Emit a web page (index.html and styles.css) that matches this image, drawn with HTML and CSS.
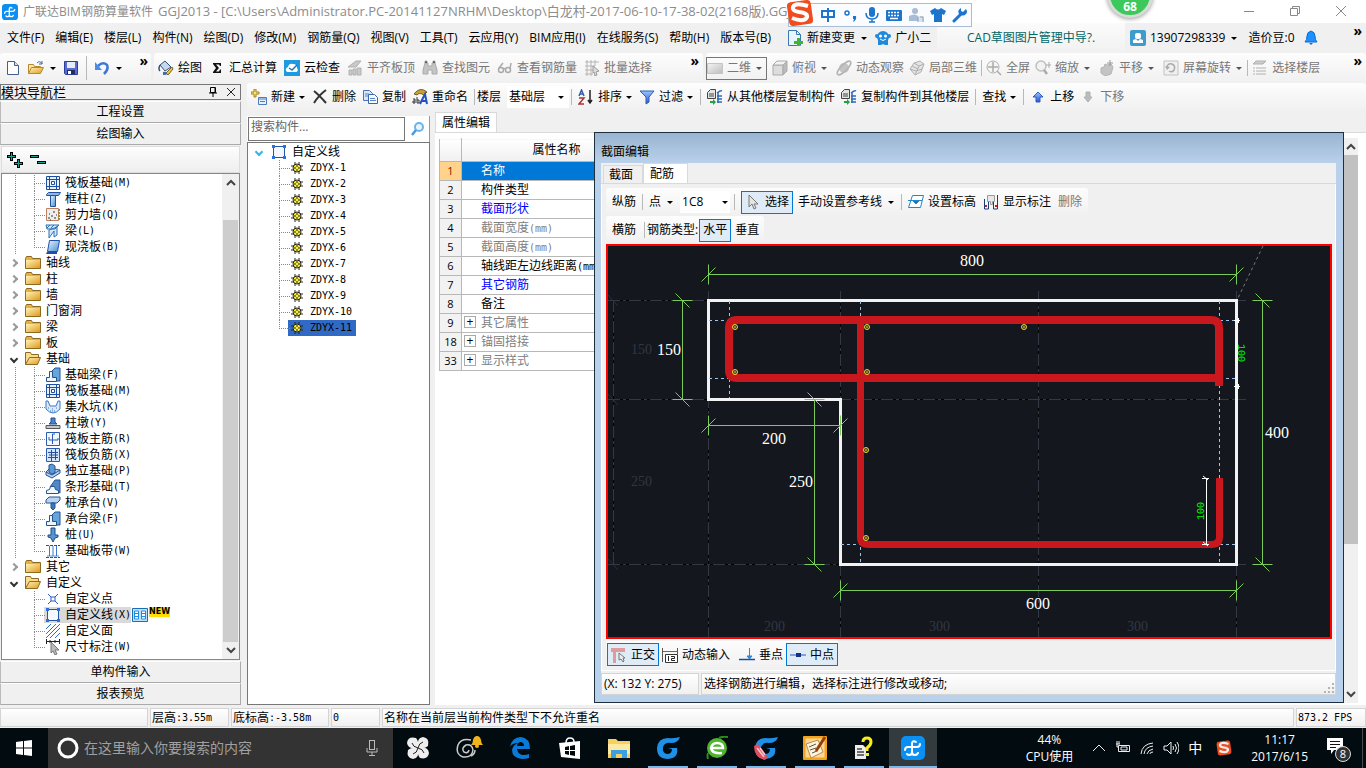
FILE: index.html
```html
<!DOCTYPE html>
<html lang="zh-CN">
<head>
<meta charset="utf-8">
<title>广联达BIM钢筋算量软件 GGJ2013</title>
<link rel="stylesheet" href="styles.css">
</head>
<body>
<svg class="sprite" aria-hidden="true">
  <defs>
    <linearGradient id="gold" x1="0" y1="0" x2="1" y2="1"><stop offset="0" stop-color="#fff3b8"/><stop offset="1" stop-color="#e09a1c"/></linearGradient>
    <linearGradient id="steel" x1="0" y1="0" x2="1" y2="1"><stop offset="0" stop-color="#eaf5ff"/><stop offset="1" stop-color="#4a8fd0"/></linearGradient>
    <linearGradient id="pale" x1="0" y1="0" x2="1" y2="1"><stop offset="0" stop-color="#f4f4f4"/><stop offset="1" stop-color="#bdbdbd"/></linearGradient>
    <linearGradient id="blue" x1="0" y1="0" x2="0" y2="1"><stop offset="0" stop-color="#9cc4ff"/><stop offset="1" stop-color="#2456d0"/></linearGradient>
  </defs>
  <symbol id="app" viewBox="0 0 24 24"><rect width="24" height="24" rx="5" fill="#0c8ff2"/><path d="M15 6q-3-2-4 1v9q0 3-3 3-1 0-2-1M4 14q0-3 3-3h9q3 0 3-3M11 16q0 3 3 3 2 0 3-2" fill="none" stroke="#fff" stroke-width="2" stroke-linecap="round"/></symbol>
  <symbol id="new" viewBox="0 0 16 16"><path d="M2.500 1.500h7l4 4v9h-11z" fill="#fff" stroke="#42608c"/><path d="M9.500 1.500v4h4" fill="#cfe0f4" stroke="#42608c"/></symbol>
  <symbol id="open" viewBox="0 0 16 16"><path d="M.5 13.500v-9h5l1 2h6v2" fill="#fbe6a0" stroke="#b58a2c"/><path d="M.5 13.500l3-6h12l-3 6z" fill="url(#gold)" stroke="#b58a2c"/><path d="M9 3q3-3 5 1M14 1v3h-3" fill="none" stroke="#49699c"/></symbol>
  <symbol id="save" viewBox="0 0 16 16"><path d="M1.500 1.500h13v13h-12l-1-1z" fill="#5a6cd0" stroke="#2b3e98"/><path d="M4 2h8v6H4z" fill="#e6ecfa"/><path d="M4 10h8v4H4z" fill="#222c58"/><path d="M5 11h3v3H5z" fill="#fff"/></symbol>
  <symbol id="undo" viewBox="0 0 16 16"><path d="M4 6q5-5 9-1 2 4-3 9" fill="none" stroke="#3d78d8" stroke-width="2.500"/><path d="M1 2v8h7z" fill="#4e8be6"/></symbol>
  <symbol id="draw" viewBox="0 0 16 16"><path d="M2 5l5-4 6 6-6 4z" fill="#c4d8ee" stroke="#35547c"/><path d="M2 5q-2 4 0 6" fill="none" stroke="#35547c" stroke-width="1.500"/><path d="M8 13l6-6 1 2-5 6z" fill="#f0c148" stroke="#7c6220"/><path d="M5 12q2-1 4 1 1 2-4 2z" fill="#3e6cb8"/></symbol>
  <symbol id="sigma" viewBox="0 0 16 16"><path d="M4 3h8v3h-1l-1-1.500H7L10 8l-3 3.500h3l1-2h1V13H4v-1l3-4-3-4z" fill="#111"/></symbol>
  <symbol id="cloud" viewBox="0 0 16 16"><path d="M0 0h16v16H0z" fill="#1e9be0"/><path d="M3 12q-3-3 1-5 1-4 5-3 4 0 4 4 2 3-1 4z" fill="#fff"/><path d="M5 8l3 2 5-5" fill="none" stroke="#1e78b8" stroke-width="1.500"/></symbol>
  <symbol id="align" viewBox="0 0 16 16"><path d="M1 7l8-6h5l-5 6zM2 10h3v5H2zM6 9h3v6H6zM10 8h4v7h-4z" fill="#c9c9c9" stroke="#b0b0b0"/></symbol>
  <symbol id="binoc" viewBox="0 0 16 16"><path d="M3 3h3v3h4V3h3l2 7v4h-5v-4H6v4H1v-4z" fill="#c4c4c4" stroke="#aaa"/><path d="M3 3V1h2v2M11 3V1h2v2" stroke="#aaa"/></symbol>
  <symbol id="glasses" viewBox="0 0 16 16"><g fill="none" stroke="#aaa" stroke-width="1.500"><circle cx="4" cy="10" r="2.500"/><circle cx="11" cy="10" r="2.500"/><path d="M6 9q1-1 2 0M2 8l4-5M13 9l1-6"/></g></symbol>
  <symbol id="batch" viewBox="0 0 16 16"><path d="M1 2h14M1 6h10M1 10h8M1 14h8M3 0v16M7 0v16M11 0v6" stroke="#b4b4b4" fill="none"/><path d="M9 6l6 5-3 1 1 3-2 1-1-4-1 1z" fill="#ddd" stroke="#999"/></symbol>
  <symbol id="plane" viewBox="0 0 16 16"><path d="M.5 3.500h15v10H.5z" fill="url(#pale)" stroke="#c5c5c5"/></symbol>
  <symbol id="cube" viewBox="0 0 16 16"><path d="M1 5h10v10H1z" fill="#ddd" stroke="#aaa"/><path d="M1 5l4-4h10l-4 4z" fill="#f2f2f2" stroke="#aaa"/><path d="M11 5l4-4v10l-4 4z" fill="#bbb" stroke="#aaa"/></symbol>
  <symbol id="orbit" viewBox="0 0 16 16"><circle cx="8" cy="8" r="5" fill="#c4c4c4"/><ellipse cx="8" cy="8" rx="9" ry="3" transform="rotate(-45 8 8)" fill="none" stroke="#b4b4b4" stroke-width="1.500"/></symbol>
  <symbol id="part" viewBox="0 0 16 16"><path d="M1 9l4-6 6-2 4 3-3 8-6 3z" fill="#e4e4e4" stroke="#b0b0b0"/><path d="M5 3l5 3 5-2M10 6l-4 9M1 9l6 2 6-2M3 6l6 3" fill="none" stroke="#b0b0b0"/></symbol>
  <symbol id="full" viewBox="0 0 16 16"><circle cx="7" cy="7" r="6" fill="#f4f4f4" stroke="#b0b0b0"/><path d="M7 2v10M2 7h10M11 11l4 4" stroke="#aaa" stroke-width="1.500"/></symbol>
  <symbol id="zoomer" viewBox="0 0 16 16"><circle cx="6" cy="6" r="5" fill="#f2f2f2" stroke="#c0c0c0" stroke-width="1.500"/><path d="M9 10l3 4" stroke="#aaa" stroke-width="2.500"/><path d="M14 2v6M11 5h5" stroke="#aaa"/></symbol>
  <symbol id="hand" viewBox="0 0 16 16"><path d="M2 8l3-1 1-3 2 1 4-1 2 3-2 7-6 2-4-3z" fill="#c4c4c4" stroke="#b4b4b4"/><path d="M11 0v6M8 3h6" stroke="#999"/></symbol>
  <symbol id="rotate" viewBox="0 0 16 16"><path d="M1 1h14v14H1z" fill="#f0f0f0" stroke="#c2c2c2"/><path d="M4 8q0-5 5-4 4 2 2 6-2 3-5 1" fill="none" stroke="#aaa" stroke-width="1.500"/><path d="M2 6l2 4 3-3z" fill="#aaa"/></symbol>
  <symbol id="floors" viewBox="0 0 16 16"><path d="M1 4l3-3h10l-3 3zM4 8h10M4 11h10M4 14h10M1 8h2M1 11h2M1 14h2" fill="#ccc" stroke="#b0b0b0"/></symbol>
  <symbol id="newdoc" viewBox="0 0 16 16"><path d="M1.500.5h8l4 4v11h-12z" fill="#e8f4ff" stroke="#3a78b4"/><path d="M9.500.5v4h4" fill="none" stroke="#3a78b4"/><path d="M10 8h3v3h3v3h-3v2h-3v-2H7v-3h3z" fill="#42b52c"/></symbol>
  <symbol id="mascot" viewBox="0 0 16 16"><path d="M3 10h10v5h-3l-2-1-2 1H3z" fill="#2089dc"/><circle cx="8" cy="7" r="6" fill="#2089dc"/><circle cx="2" cy="6" r="2" fill="#2089dc"/><circle cx="14" cy="6" r="2" fill="#2089dc"/><circle cx="5.500" cy="6" r="1.500" fill="#fff"/><circle cx="10.500" cy="6" r="1.500" fill="#fff"/><path d="M5 9q3 3 6 0" fill="none" stroke="#fff"/></symbol>
  <symbol id="user" viewBox="0 0 16 16"><rect width="16" height="16" rx="2" fill="#3f9bcc"/><rect x="5" y="3" width="6" height="6" rx="2" fill="#fff"/><path d="M3 13v-3l3-1 2 2 2-2 3 1v3z" fill="#fff"/></symbol>
  <symbol id="bell" viewBox="0 0 16 16"><path d="M2 12q2-2 2-6 0-4 4-5 4 1 4 5 0 4 2 6z" fill="#1e90ff" stroke="#0c6fd0"/><path d="M6 13h4l-2 2z" fill="#1670cc"/></symbol>
  <symbol id="create" viewBox="0 0 16 16"><path d="M3 0h2v3h3v2H5v3H3V5H0V3h3z" fill="#fce36a" stroke="#a08318"/><path d="M7.500 8.500h8v7h-8z" fill="#e8f2ff" stroke="#4e7bc0"/><path d="M7 10h8M9 12.500h5" stroke="#4e7bc0"/></symbol>
  <symbol id="cross" viewBox="0 0 16 16"><path d="M2 2q5 4 12 12M14 1Q7 6 2 14" fill="none" stroke="#333" stroke-width="2"/></symbol>
  <symbol id="copy" viewBox="0 0 16 16"><path d="M1.500 1.500h6l3 3v7h-9z" fill="#d7e6fb" stroke="#4b74b8"/><path d="M6.500 5.500h6l3 3v6h-9z" fill="#f4f9ff" stroke="#3c66ac"/><path d="M8 9.500h5M8 11.500h6M3 5h4M3 7h3" stroke="#5b84c8"/></symbol>
  <symbol id="rename" viewBox="0 0 16 16"><path d="M2 5q6-8 13-2l-3 3q-5-3-7 0z" fill="#c9a033" stroke="#786020"/><path d="M1 10h2v4H1v-2h2M5 8v6h2v-3H5" fill="none" stroke="#333"/><path d="M8 15l5-10 2 10M10 12h5" fill="none" stroke="#2450c0" stroke-width="2"/></symbol>
  <symbol id="sort" viewBox="0 0 16 16"><path d="M1 7l2.500-6L6 7M2 5h3" fill="none" stroke="#335ca8" stroke-width="1.500"/><path d="M1 9h5l-5 6h5" fill="none" stroke="#a83434" stroke-width="1.500"/><path d="M12 1v12M10 11l2 3 2-3" fill="none" stroke="#222" stroke-width="1.500"/></symbol>
  <symbol id="filter" viewBox="0 0 16 16"><path d="M1 2h14L10 8v5l-3 2V8z" fill="url(#blue)" stroke="#2c5cb8"/></symbol>
  <symbol id="floorcopy" viewBox="0 0 16 16"><path d="M3.500.5h5v9h-8v-6z" fill="#e4e4e4" stroke="#444"/><path d="M2 5h5M2 7h5" stroke="#444"/><path d="M10 4q4-3 5-2M10 7h5M10 10h5M10 13h5M11 3v11" stroke="#2e68b8" fill="none" stroke-width="1.500"/><path d="M3 12h3v-2l3 3-3 3v-2H3z" fill="#22a33c"/></symbol>
  <symbol id="up" viewBox="0 0 16 16"><path d="M8 3l5 5h-3v5H6V8H3z" fill="url(#blue)" stroke="#2c5cc8"/></symbol>
  <symbol id="down" viewBox="0 0 16 16"><path d="M8 13L4 8h2V3h4v5h2z" fill="#bbb" stroke="#b0b0b0"/></symbol>
  <symbol id="folder" viewBox="0 0 16 16"><path d="M.5 3.500l1-2h5l1 2h8v10H.5z" fill="#e8b040" stroke="#8c6a20"/><path d="M1 5h14v8H1z" fill="url(#gold)"/></symbol>
  <symbol id="folderopen" viewBox="0 0 16 16"><path d="M.5 13.500v-12h5l1 2h7v3" fill="#f7dc8c" stroke="#8c6a20"/><path d="M.5 13.500l4-7h11l-3 7z" fill="url(#gold)" stroke="#8c6a20"/></symbol>
  <symbol id="raft" viewBox="0 0 16 16"><path d="M1.500 1.500h13v13h-13z" fill="#e6f0ff" stroke="#1e4f9c"/><path d="M4.500 1v14M11.500 1v14M1 4.500h14M1 11.500h14" stroke="#1e4f9c"/><path d="M6.500 6.500h3v3h-3z" fill="#fff" stroke="#1e4f9c"/></symbol>
  <symbol id="column" viewBox="0 0 16 16"><path d="M1.500 3.500l2-2h12l-2 3h-12z" fill="#8fb5ea" stroke="#2450a0"/><path d="M5.500 4.500h5v11h-5z" fill="url(#steel)" stroke="#2450a0"/></symbol>
  <symbol id="wall" viewBox="0 0 16 16"><path d="M1.500 1.500h12v12h-12z" fill="#eee" stroke="#c08060"/><path d="M3 11h2M6 9h2M9 11h2M4 7h1M8 5h2M11 8h1M5 13h1" stroke="#333"/><path d="M14 2v12" stroke="#b08040" stroke-dasharray="2 1" stroke-width="2"/></symbol>
  <symbol id="beam" viewBox="0 0 16 16"><path d="M1 2h13l-4 4H2zM4 15V7l8-3v8l-3 2V8z" fill="#d4e8fa" stroke="#2d6eb8"/><path d="M2 5l3-3M6 5l3-3M10 5l4-3" stroke="#2d6eb8"/></symbol>
  <symbol id="slab" viewBox="0 0 16 16"><path d="M4.500 1.500h10l-2 11H2.500z" fill="url(#steel)" stroke="#1e50a8"/><path d="M2 13h10v2H1z" fill="#1e50a8"/></symbol>
  <symbol id="fbeam" viewBox="0 0 16 16"><path d="M5 6l5-5h5v13h-4z" fill="#68a4dc" stroke="#1e5490"/><path d="M1.500 14.500v-4h3v-6h3v6h4v4z" fill="#e8f4ff" stroke="#1e5490"/></symbol>
  <symbol id="pit" viewBox="0 0 16 16"><path d="M1 2h2l2 5h6l2-5h2v8q-7 8-14 0z" fill="#d8eaff" stroke="#3c78c4"/><path d="M3 9h2M7 10h2M11 9h2M5 12h6" stroke="#3c78c4" stroke-dasharray="1 1"/></symbol>
  <symbol id="pier" viewBox="0 0 16 16"><path d="M1 10.500h14v3H1z" fill="#c8c8c8" stroke="#555"/><path d="M4 9l2-2V3h4v4l2 2z" fill="#4c84cc" stroke="#234f90"/></symbol>
  <symbol id="rebar1" viewBox="0 0 16 16"><path d="M1.500 1.500h13v13h-13z" fill="#f1f6ff" stroke="#2c5cb0"/><path d="M10 3H7.500v10M4 6v3h9V7" fill="none" stroke="#2c5cb0"/></symbol>
  <symbol id="rebar2" viewBox="0 0 16 16"><path d="M1.500 1.500h13v13h-13z" fill="#d4e5ff" stroke="#2c5cb0"/><path d="M6.500 3v11M10.500 2v11M3 5.500h10M3 10.500h10M4 8h9" fill="none" stroke="#244f98"/></symbol>
  <symbol id="pad" viewBox="0 0 16 16"><path d="M1 9l3-3h5l6 1v3l-8 5-6-3z" fill="#b4d2f0" stroke="#245490"/><path d="M4 2l3-1 3 2v7l-3 1-3-2z" fill="#5c98d8" stroke="#245490"/><path d="M1 9l6 3 8-5" fill="none" stroke="#245490"/></symbol>
  <symbol id="strip" viewBox="0 0 16 16"><path d="M5 8l5-7h5v13z" fill="#4e88c8" stroke="#245490"/><path d="M1.500 14.500v-3l3-1 1-3h4l1 3 3 1v3z" fill="#eef6ff" stroke="#245490"/></symbol>
  <symbol id="cap" viewBox="0 0 16 16"><path d="M1 5l3-3h11v3l-3 3H1z" fill="#b8d4f2" stroke="#245490"/><path d="M6 8h4v5l-2 2-2-2z" fill="#3d78bc" stroke="#245490"/></symbol>
  <symbol id="pile" viewBox="0 0 16 16"><path d="M6 1h4v7h3v2l-3 1-2 4-2-4-3-1V8h3z" fill="#5a94d4" stroke="#1d4c88"/></symbol>
  <symbol id="band" viewBox="0 0 16 16"><path d="M1 2.500h14M1 14.500h14" stroke="#244f98" stroke-dasharray="3 1"/><path d="M2 12h12v2H2z" fill="#a8c8f0"/><path d="M4.500 3v10M11.500 3v10M8 3v10" stroke="#3c78d0"/></symbol>
  <symbol id="point" viewBox="0 0 16 16"><path d="M3 3l10 10M13 3L3 13" stroke="#2c5cc0"/><path d="M6 6h4v4H6z" fill="#fff" stroke="#2c5cc0"/></symbol>
  <symbol id="line" viewBox="0 0 16 16"><path d="M2.500 2.500h11v11h-11z" fill="#f4f8ff" stroke="#2456a8"/><path d="M1 1h3v3H1zM12 1h3v3h-3zM1 12h3v3H1zM12 12h3v3h-3z" fill="#2c6fe0"/></symbol>
  <symbol id="face" viewBox="0 0 16 16"><path d="M1 6l5-5M1 11L11 1M1 15L15 1M5 15l10-10M10 15l5-5" stroke="#2c6cd8"/></symbol>
  <symbol id="dim" viewBox="0 0 16 16"><path d="M1 2.500h14M1.500 0v5M14.500 0v5M5 1v3M10 1v3" stroke="#222"/><path d="M6 3v11l2-2 2 4 2-1-2-4h4z" fill="#bbb" stroke="#777"/></symbol>
  <symbol id="book" viewBox="0 0 16 16"><path d="M.5 1.500h15v13H.5z" fill="#bfe2fa" stroke="#1c6db4"/><path d="M2.500 4h4v8h-4zM9.500 4h4v8h-4z" fill="#fff" stroke="#1c8de4"/><path d="M3 6.500h3M3 9.500h3M10 6.500h3M10 9.500h3" stroke="#1c8de4"/></symbol>
  <symbol id="gear" viewBox="0 0 12 12"><path d="M4 0v12M8 0v12M0 4h12M0 8h12" stroke="#222"/><circle cx="6" cy="6" r="4" fill="#f5ec3c" stroke="#222"/><path d="M6 3v6M3 6h6" stroke="#222"/><path d="M5 5h2v2H5z" fill="#f5ec3c"/></symbol>
  <symbol id="lens" viewBox="0 0 16 16"><circle cx="10" cy="6" r="4" fill="#eaf6ff" stroke="#6ab4ec" stroke-width="2"/><path d="M7 9l-4 5" stroke="#4a9ce0" stroke-width="2.500"/></symbol>
  <symbol id="cursor" viewBox="0 0 16 16"><path d="M4 1v12l3-3 2 5 2-1-2-4h4z" fill="#e4e4e4" stroke="#777"/></symbol>
  <symbol id="level" viewBox="0 0 16 16"><path d="M4.500 1.500h11l-3 12H.5z" fill="#fff" stroke="#2288cc"/><path d="M0 6.500h14M5 7h6l-3 3z" fill="#1c6cc0" stroke="#2288cc"/></symbol>
  <symbol id="show" viewBox="0 0 16 16"><path d="M1.500 5v10h4M14.500 1v14h-4M5.500 8v7M10.500 8v7" fill="none" stroke="#1c3c78"/><path d="M4.500 1.500h7v6h-2v3h-2v-3h-3z" fill="#e8e8e8" stroke="#999"/><path d="M3 11v2M13 11v2" stroke="#c02020" stroke-width="2"/></symbol>
  <symbol id="ortho" viewBox="0 0 16 16"><path d="M0 1h14v4H5v11H2V5H0z" fill="#e09c9c"/><path d="M8 6v7l2-1 2 3 1-1-1-3h2z" fill="#eee" stroke="#777"/></symbol>
  <symbol id="dyn" viewBox="0 0 16 16"><path d="M.5 1v14M15.500 1v6" stroke="#555"/><path d="M1 4.500h14" stroke="#b04848"/><path d="M3.500 7.500h12v8h-12z" fill="#fff" stroke="#333"/><path d="M6.500 9v5M9 9.500h3.500v2H9.500v2H13" fill="none" stroke="#222"/></symbol>
  <symbol id="perp" viewBox="0 0 16 16"><path d="M0 12.500h16" stroke="#1c4ca0" stroke-width="1.500"/><path d="M10.500 1v9M8 9h5l-2.500 3z" fill="#2888e0" stroke="#2888e0"/></symbol>
  <symbol id="mid" viewBox="0 0 16 16"><path d="M0 8h16" stroke="#2858b8"/><path d="M6 6h5v4H6z" fill="#12308c"/></symbol>
  <symbol id="gswirl" viewBox="0 0 24 24"><path d="M24 1q-2 6-9 6-6-1-8 4-1 6 4 7 5 0 5-5l-4-1h9q2 10-9 11Q1 23 1 12 2 2 12 2q4 1 12-1z" fill="#1e90e8"/></symbol>
</svg>

<header class="titlebar">
  <svg class="i16"><use href="#app"/></svg>
  <h1>广联达BIM钢筋算量软件 <span>GGJ2013 - [C:\Users\Administrator.PC-20141127NRHM\Desktop\白龙村-2017-06-10-17-38-02(2168版).GGJ12]</span></h1>
  <div class="winctl">
    <button aria-label="最小化"><svg class="i12" viewBox="0 0 12 12"><path d="M1 6.500h10"/></svg></button>
    <button aria-label="还原"><svg class="i12" viewBox="0 0 12 12"><path d="M1.500 3.500h7v7h-7zM3.500 3V1.500h7v7H9"/></svg></button>
    <button aria-label="关闭"><svg class="i12" viewBox="0 0 12 12"><path d="M1 1l10 10M11 1L1 11"/></svg></button>
  </div>
  <div class="ime">
    <svg class="sogou" viewBox="0 0 28 28"><rect x="2" y="2" width="24" height="24" rx="4" transform="rotate(-8 14 14)" fill="#f04c1c"/><path d="M22 7q-13-4-15 1-1 4 6 5 9 1 8 5-3 6-15 1" fill="none" stroke="#fff" stroke-width="4"/></svg>
    <svg class="i16" viewBox="0 0 16 16"><path d="M2 4h12v6H2zM8 1v14" fill="none" stroke="#1d74cc" stroke-width="2"/></svg>
    <svg class="i16" viewBox="0 0 16 16"><circle cx="5" cy="6" r="2" fill="none" stroke="#1d74cc" stroke-width="1.500"/><path d="M11 9h3q1 4-3 6l1-3h-1z" fill="#1d74cc"/></svg>
    <svg class="i16" viewBox="0 0 16 16"><rect x="5" width="6" height="10" rx="3" fill="#1d74cc"/><path d="M2 6q0 6 6 6t6-6M8 12v3M5 15h6" fill="none" stroke="#1d74cc" stroke-width="1.500"/></svg>
    <svg class="i16" viewBox="0 0 16 16"><rect y="3" width="16" height="11" rx="1" fill="#1d74cc"/><path d="M2 5.500h12M2 8.500h12" stroke="#fff" stroke-width="1.500" stroke-dasharray="2 1"/><path d="M4 11.500h8" stroke="#fff" stroke-width="1.500"/></svg>
    <svg class="i16" viewBox="0 0 16 16"><g fill="#a8bcd4"><circle cx="7" cy="4" r="3"/><path d="M1 14V9q6-3 9 0v5z"/><path d="M10 9h6v6h-6z" fill="#dbe3ee"/></g><path d="M10 10v5M12 10h3v5" stroke="#8ca4c0" fill="none"/></svg>
    <svg class="i16" viewBox="0 0 16 16"><path d="M5 1l-5 3 2 4 2-1v8h8V7l2 1 2-4-5-3q-3 3-6 0z" fill="#1d74cc"/></svg>
    <svg class="i16" viewBox="0 0 16 16"><path d="M2 14l7-7" stroke="#1d74cc" stroke-width="3" stroke-linecap="round"/><path d="M14 2l-3 3-2-1V1q-4 2-2 6 4 3 7 0 2-2 0-5z" fill="#1d74cc"/></svg>
  </div>
  <div class="bubble">68</div>
</header>

<nav class="menubar">
  <div class="menus">
    <button>文件(F)</button><button>编辑(E)</button><button>楼层(L)</button><button>构件(N)</button><button>绘图(D)</button><button>修改(M)</button><button>钢筋量(Q)</button><button>视图(V)</button><button>工具(T)</button><button>云应用(Y)</button><button>BIM应用(I)</button><button>在线服务(S)</button><button>帮助(H)</button><button>版本号(B)</button>
    <button class="change"><svg class="i16"><use href="#newdoc"/></svg>新建变更<i class="caret"></i></button>
    <button class="guide"><svg class="i16"><use href="#mascot"/></svg>广小二</button>
  </div>
  <a class="notice" href="#">CAD草图图片管理中导?.</a>
  <div class="account">
    <button><svg class="i16"><use href="#user"/></svg>13907298339<i class="caret"></i></button>
    <span>造价豆:0</span>
    <svg class="i16"><use href="#bell"/></svg>
  </div>
  <button class="more" aria-label="更多">»</button>
</nav>

<div class="toolbars">
  <div class="bar files">
    <button aria-label="新建"><svg class="i16"><use href="#new"/></svg></button>
    <button aria-label="打开"><svg class="i16"><use href="#open"/></svg><i class="caret"></i></button>
    <button aria-label="保存"><svg class="i16"><use href="#save"/></svg></button>
    <i class="sep"></i>
    <button aria-label="撤销"><svg class="i16"><use href="#undo"/></svg><i class="caret"></i></button>
    <button class="more" aria-label="更多">»</button>
  </div>
  <div class="bar tools">
    <button><svg class="i16"><use href="#draw"/></svg>绘图</button>
    <button><svg class="i16"><use href="#sigma"/></svg>汇总计算</button>
    <button><svg class="i16"><use href="#cloud"/></svg>云检查</button>
    <button disabled><svg class="i16"><use href="#align"/></svg>平齐板顶</button>
    <button disabled><svg class="i16"><use href="#binoc"/></svg>查找图元</button>
    <button disabled><svg class="i16"><use href="#glasses"/></svg>查看钢筋量</button>
    <button disabled><svg class="i16"><use href="#batch"/></svg>批量选择</button>
    <button class="more" aria-label="更多">»</button>
  </div>
  <div class="bar views">
    <button class="boxed" disabled><svg class="i16"><use href="#plane"/></svg>二维<i class="caret"></i></button>
    <button disabled><svg class="i16"><use href="#cube"/></svg>俯视<i class="caret"></i></button>
    <button disabled><svg class="i16"><use href="#orbit"/></svg>动态观察</button>
    <button disabled><svg class="i16"><use href="#part"/></svg>局部三维</button>
    <i class="sep"></i>
    <button disabled><svg class="i16"><use href="#full"/></svg>全屏</button>
    <button disabled><svg class="i16"><use href="#zoomer"/></svg>缩放<i class="caret"></i></button>
    <button disabled><svg class="i16"><use href="#hand"/></svg>平移<i class="caret"></i></button>
    <button class="tight" disabled><svg class="i16"><use href="#rotate"/></svg>屏幕旋转<i class="caret"></i></button>
    <i class="sep"></i>
    <button disabled><svg class="i16"><use href="#floors"/></svg>选择楼层</button>
    <button class="more" aria-label="更多">»</button>
  </div>
</div>

<main class="workspace">
  <aside class="nav">
    <header class="navhead"><h2>模块导航栏</h2>
      <button aria-label="固定"><svg class="i12" viewBox="0 0 12 12"><path d="M3.500 1.500h5v5h-5zM2 7h8M6 7v4M8 2v5" fill="none" stroke="#000"/></svg></button>
      <button aria-label="关闭"><svg class="i12" viewBox="0 0 12 12"><path d="M2 2l8 8M10 2l-8 8" stroke="#222"/></svg></button>
    </header>
    <button class="section">工程设置</button>
    <button class="section">绘图输入</button>
    <div class="treebar">
      <button aria-label="全部展开"><svg class="i16" viewBox="0 0 16 16"><path d="M4.500 0v9M0 4.500h9M11.500 7v9M7 11.500h9" stroke="#000" stroke-width="3"/><path d="M4.500 1v7M1 4.500h7M11.500 8v7M8 11.500h7" stroke="#18a096"/></svg></button>
      <button aria-label="全部折叠"><svg class="i16" viewBox="0 0 16 16"><path d="M0 4.500h9M7 10.500h9" stroke="#000" stroke-width="3"/><path d="M1 4.500h7M8 10.500h7" stroke="#18a096"/></svg></button>
    </div>
    <div class="treebox">
      <ul class="tree">
        <li class="leaf trunk"><svg><use href="#raft"/></svg>筏板基础<b>(M)</b></li>
        <li class="leaf trunk"><svg><use href="#column"/></svg>框柱<b>(Z)</b></li>
        <li class="leaf trunk"><svg><use href="#wall"/></svg>剪力墙<b>(Q)</b></li>
        <li class="leaf trunk"><svg><use href="#beam"/></svg>梁<b>(L)</b></li>
        <li class="leaf trunk last"><svg><use href="#slab"/></svg>现浇板<b>(B)</b></li>
        <li class="node"><i></i><svg><use href="#folder"/></svg>轴线</li>
        <li class="node"><i></i><svg><use href="#folder"/></svg>柱</li>
        <li class="node"><i></i><svg><use href="#folder"/></svg>墙</li>
        <li class="node"><i></i><svg><use href="#folder"/></svg>门窗洞</li>
        <li class="node"><i></i><svg><use href="#folder"/></svg>梁</li>
        <li class="node"><i></i><svg><use href="#folder"/></svg>板</li>
        <li class="node open"><i></i><svg><use href="#folderopen"/></svg>基础</li>
        <li class="leaf trunk"><svg><use href="#fbeam"/></svg>基础梁<b>(F)</b></li>
        <li class="leaf trunk"><svg><use href="#raft"/></svg>筏板基础<b>(M)</b></li>
        <li class="leaf trunk"><svg><use href="#pit"/></svg>集水坑<b>(K)</b></li>
        <li class="leaf trunk"><svg><use href="#pier"/></svg>柱墩<b>(Y)</b></li>
        <li class="leaf trunk"><svg><use href="#rebar1"/></svg>筏板主筋<b>(R)</b></li>
        <li class="leaf trunk"><svg><use href="#rebar2"/></svg>筏板负筋<b>(X)</b></li>
        <li class="leaf trunk"><svg><use href="#pad"/></svg>独立基础<b>(P)</b></li>
        <li class="leaf trunk"><svg><use href="#strip"/></svg>条形基础<b>(T)</b></li>
        <li class="leaf trunk"><svg><use href="#cap"/></svg>桩承台<b>(V)</b></li>
        <li class="leaf trunk"><svg><use href="#fbeam"/></svg>承台梁<b>(F)</b></li>
        <li class="leaf trunk"><svg><use href="#pile"/></svg>桩<b>(U)</b></li>
        <li class="leaf trunk last"><svg><use href="#band"/></svg>基础板带<b>(W)</b></li>
        <li class="node"><i></i><svg><use href="#folder"/></svg>其它</li>
        <li class="node open"><i></i><svg><use href="#folderopen"/></svg>自定义</li>
        <li class="leaf"><svg><use href="#point"/></svg>自定义点</li>
        <li class="leaf"><span class="picked"><svg><use href="#line"/></svg>自定义线<b>(X)</b></span><svg class="bookicon"><use href="#book"/></svg><em>NEW</em></li>
        <li class="leaf"><svg><use href="#face"/></svg>自定义面</li>
        <li class="leaf last"><svg><use href="#dim"/></svg>尺寸标注<b>(W)</b></li>
      </ul>
      <div class="scroll"><svg class="i12" viewBox="0 0 12 12"><path d="M2 8l4-4 4 4"/></svg><i></i><svg class="i12" viewBox="0 0 12 12"><path d="M2 4l4 4 4-4"/></svg></div>
    </div>
    <button class="section">单构件输入</button>
    <button class="section">报表预览</button>
  </aside>

  <section class="editor">
    <div class="bar parts">
      <button class="tight"><svg class="i16"><use href="#create"/></svg>新建<i class="caret"></i></button>
      <button><svg class="i16"><use href="#cross"/></svg>删除</button>
      <button><svg class="i16"><use href="#copy"/></svg>复制</button>
      <button><svg class="i16"><use href="#rename"/></svg>重命名</button>
      <i class="sep"></i>
      <label class="combo floor"><span>楼层</span><select><option>基础层</option></select><i class="caret"></i></label>
      <i class="sep"></i>
      <button class="tight"><svg class="i16"><use href="#sort"/></svg>排序<i class="caret"></i></button>
      <button class="tight"><svg class="i16"><use href="#filter"/></svg>过滤<i class="caret"></i></button>
      <i class="sep"></i>
      <button><svg class="i16"><use href="#floorcopy"/></svg>从其他楼层复制构件</button>
      <button><svg class="i16"><use href="#floorcopy"/></svg>复制构件到其他楼层</button>
      <i class="sep"></i>
      <button class="tight">查找<i class="caret"></i></button>
      <i class="sep"></i>
      <button><svg class="i16"><use href="#up"/></svg>上移</button>
      <button disabled><svg class="i16"><use href="#down"/></svg>下移</button>
    </div>
    <div class="panes">
      <div class="list">
        <div class="search"><input type="text" placeholder="搜索构件..." aria-label="搜索构件"><button aria-label="搜索"><svg class="i16"><use href="#lens"/></svg></button></div>
        <ul class="items">
          <li class="root"><i></i><svg><use href="#line"/></svg>自定义线</li>
          <li><svg><use href="#gear"/></svg><b>ZDYX-1</b></li>
          <li><svg><use href="#gear"/></svg><b>ZDYX-2</b></li>
          <li><svg><use href="#gear"/></svg><b>ZDYX-3</b></li>
          <li><svg><use href="#gear"/></svg><b>ZDYX-4</b></li>
          <li><svg><use href="#gear"/></svg><b>ZDYX-5</b></li>
          <li><svg><use href="#gear"/></svg><b>ZDYX-6</b></li>
          <li><svg><use href="#gear"/></svg><b>ZDYX-7</b></li>
          <li><svg><use href="#gear"/></svg><b>ZDYX-8</b></li>
          <li><svg><use href="#gear"/></svg><b>ZDYX-9</b></li>
          <li><svg><use href="#gear"/></svg><b>ZDYX-10</b></li>
          <li class="last"><span class="current"><svg><use href="#gear"/></svg><b>ZDYX-11</b></span></li>
        </ul>
      </div>
      <div class="props">
        <button class="tab">属性编辑</button>
        <div class="sheet">
          <table>
            <thead><tr><th></th><th>属性名称</th><th></th></tr></thead>
            <tbody>
              <tr class="sel"><th>1</th><td>名称</td><td></td></tr>
              <tr><th>2</th><td>构件类型</td><td></td></tr>
              <tr class="link"><th>3</th><td>截面形状</td><td></td></tr>
              <tr class="dim"><th>4</th><td>截面宽度<b>(mm)</b></td><td></td></tr>
              <tr class="dim"><th>5</th><td>截面高度<b>(mm)</b></td><td></td></tr>
              <tr><th>6</th><td>轴线距左边线距离<b>(mm)</b></td><td></td></tr>
              <tr class="link"><th>7</th><td>其它钢筋</td><td></td></tr>
              <tr><th>8</th><td>备注</td><td></td></tr>
              <tr class="dim fold"><th>9</th><td><button>+</button>其它属性</td><td></td></tr>
              <tr class="dim fold"><th>18</th><td><button>+</button>锚固搭接</td><td></td></tr>
              <tr class="dim fold"><th>33</th><td><button>+</button>显示样式</td><td></td></tr>
            </tbody>
          </table>
          <div class="scroll outer"><svg class="i12" viewBox="0 0 12 12"><path d="M2 8l4-4 4 4"/></svg><i></i><svg class="i12" viewBox="0 0 12 12"><path d="M2 4l4 4 4-4"/></svg></div>
        </div>
      </div>
    </div>

    <div class="dialog" role="dialog" aria-labelledby="dlg">
      <h2 id="dlg">截面编辑</h2>
      <div class="client">
        <div class="tabs"><button>截面</button><button class="on">配筋</button></div>
        <div class="body">
          <div class="bar rebar">
            <button>纵筋</button><i class="sep"></i>
            <button>点<i class="caret"></i></button>
            <label class="combo size"><select aria-label="钢筋规格"><option>1C8</option></select><i class="caret"></i></label>
            <i class="sep"></i>
            <button class="on"><svg class="i16"><use href="#cursor"/></svg>选择</button>
            <button class="ref">手动设置参考线<i class="caret"></i></button>
            <i class="sep"></i>
            <button><svg class="i16"><use href="#level"/></svg>设置标高</button>
            <button><svg class="i16"><use href="#show"/></svg>显示标注</button>
            <button disabled>删除</button>
          </div>
          <div class="bar stirrup">
            <button>横筋</button><i class="sep"></i>
            <span>钢筋类型:</span><button class="on">水平</button><button>垂直</button>
          </div>
          <div class="canvas">
            <svg viewBox="608 246 722 391">
              <defs>
                <g id="slash"><path d="M0-10v20M-7 7L7-7"/></g>
                <g id="back"><path d="M-10 0h20M-7-7L7 7"/></g>
                <g id="dot"><circle r="2.500" fill="#3a3020" stroke="#f5d838"/><path d="M0-1v2" stroke="#f5d838"/></g>
              </defs>
              <g fill="none" stroke="#000"><path d="M708.500 291v346M840.500 291v346M1038.500 291v346M1236.500 291v346M608 300.500h638M608 399.500h638M608 564.500h638M613.500 300v264"/></g>
              <g fill="none" stroke="#323945" stroke-dasharray="12 3 3 3"><path d="M708.500 291v346M840.500 291v346M1038.500 291v346M1236.500 291v346M608 300.500h638M608 399.500h638M608 564.500h638M613.500 300v264"/></g>
              <path d="M608 295l10 11M608 394l10 11M608 559l10 11" stroke="#2a303a" fill="none"/>
              <path d="M1263 246l-25 52" stroke="#777" stroke-dasharray="3 3" fill="none"/>
              <path d="M708.500 300.500h528v264h-396v-165h-132z" fill="none" stroke="#f2f2f2" stroke-width="3"/>
              <path d="M709 320.500h20M709 378.500h20M729.500 301v97M860.500 301v263M841 544.500h20M1219.500 301v263M1220 320.500h16M1220 378.500h16M1220 544.500h16" fill="none" stroke="#9cc4ec" stroke-dasharray="3 3"/>
              <g fill="none" stroke="#c9171e">
                <path d="M1219 378H737q-8 0-8-8V328q0-8 8-8h474q8 0 8 8v58" stroke-width="8"/>
                <path d="M860.500 320v217q0 7.500 8 7.500h343q8 0 8-7.500v-59" stroke-width="7"/>
              </g>
              <g fill="none" stroke="#7cc95c">
                <path d="M708 274.500h528M682.500 300v99M708 425.500h132M814.500 399v165M840 590.500h396M1262.500 300v264"/>
                <use href="#slash" x="708.500" y="274.500"/><use href="#slash" x="1236.500" y="274.500"/>
                <use href="#slash" x="708.500" y="425.500"/><use href="#slash" x="840.500" y="425.500"/>
                <use href="#slash" x="840.500" y="590.500"/><use href="#slash" x="1236.500" y="590.500"/>
                <use href="#back" x="682.500" y="300.500"/><use href="#back" x="682.500" y="399.500"/>
                <use href="#back" x="814.500" y="399.500"/><use href="#back" x="814.500" y="564.500"/>
                <use href="#back" x="1262.500" y="300.500"/><use href="#back" x="1262.500" y="564.500"/>
              </g>
              <path d="M1206.500 478v66M1202 478.500h7M1202 544.500h7M1203 476l5 4M1203 542l5 4M1234 320.500h6M1238.500 318v5M1234 386.500h6M1238.500 384v5" fill="none" stroke="#fff"/>
              <use href="#dot" x="735" y="327"/><use href="#dot" x="735" y="372"/><use href="#dot" x="867" y="327"/><use href="#dot" x="867" y="372"/><use href="#dot" x="866" y="450"/><use href="#dot" x="866" y="538"/><use href="#dot" x="1024" y="327"/>
              <g class="value"><text x="960" y="266">800</text><text x="657" y="355">150</text><text x="762" y="444">200</text><text x="789" y="487">250</text><text x="1026" y="609">600</text><text x="1265" y="438">400</text></g>
              <g class="ghost"><text x="631" y="354">150</text><text x="631" y="486">250</text><text x="764" y="631">200</text><text x="929" y="631">300</text><text x="1127" y="631">300</text></g>
              <g class="hook"><text transform="translate(1238 344) rotate(90)">100</text><text transform="translate(1204 520) rotate(-90)">100</text></g>
            </svg>
          </div>
          <div class="bar snaps">
            <button class="on"><svg class="i16"><use href="#ortho"/></svg>正交</button>
            <button><svg class="i16"><use href="#dyn"/></svg>动态输入</button>
            <button class="perp"><svg class="i16"><use href="#perp"/></svg>垂点</button>
            <button class="on"><svg class="i16"><use href="#mid"/></svg>中点</button>
          </div>
        </div>
        <footer class="hint"><span>(X: 132 Y: 275)</span><span>选择钢筋进行编辑，选择标注进行修改或移动;<svg class="i12" viewBox="0 0 12 12"><path d="M9 1h2v2H9zM5 5h2v2H5zM9 5h2v2H9zM1 9h2v2H1zM5 9h2v2H5zM9 9h2v2H9z" fill="#b5b5b5"/></svg></span></footer>
      </div>
    </div>
  </section>
</main>

<footer class="status">
  <span class="s1"></span><span class="s2">层高<b>:3.55m</b></span><span class="s3">底标高<b>:-3.58m</b></span><span class="s4"><b>0</b></span><span class="s5">名称在当前层当前构件类型下不允许重名</span><span class="s6"><b>873.2 FPS</b></span>
</footer>

<footer class="taskbar">
  <button class="start" aria-label="开始"><svg class="i16" viewBox="0 0 16 16"><path d="M0 2l7-1v6.500H0zM8 1l8-1v7.500H8zM0 8.500h7V15l-7-1zM8 8.500h8V16l-8-1z" fill="#fff"/></svg></button>
  <label class="find">
    <svg class="i24" viewBox="0 0 24 24"><circle cx="12" cy="12" r="9" fill="none" stroke="#fff" stroke-width="3"/></svg>
    <input type="text" placeholder="在这里输入你要搜索的内容" aria-label="搜索">
    <svg class="i16" viewBox="0 0 16 16"><rect x="5.500" y=".5" width="5" height="9" fill="none" stroke="#bbb"/><path d="M3 8v4h10V8M8 12v3M5 15.500h6" fill="none" stroke="#bbb"/></svg>
  </label>
  <div class="apps">
    <button class="wide" aria-label="风扇"><svg class="i24" viewBox="0 0 24 24"><g fill="#eee"><path d="M12 12Q2 14 1 7q1-7 9-5 3 3 2 10z"/><path d="M12 12Q10 2 17 1q7 1 5 9-3 3-10 2z"/><path d="M12 12q10-2 11 5-1 7-9 5-3-3-2-10z"/><path d="M12 12q2 10-5 11-7-1-5-9 3-3 10-2z"/></g><path d="M12 12q-5-1-6-5M12 12q1-5 5-6M12 12q5 1 6 5M12 12q-1 5-5 6" stroke="#222" fill="none"/></svg></button>
    <button class="wide" aria-label="通知助手"><svg class="i28" viewBox="0 0 28 28"><path d="M16 6Q6 4 3 11q-3 9 5 12 9 1 10-7-1-6-7-5-5 3-2 7 4 2 5-2M16 22q4-2 4-6" fill="none" stroke="#ccc" stroke-width="1.500"/><path d="M16 11q2-2 2-5 1-4 4-4t4 4q0 3 2 5z" fill="#f0b41c"/><circle cx="22" cy="12" r="2" fill="#f0b41c"/></svg></button>
    <button class="wide" aria-label="Edge"><svg class="i24" viewBox="0 0 24 24"><path d="M2 11Q4 1 13 1q9 1 9 12H9q1 6 7 6 3 0 5-1v4q-3 1-7 1-10-1-10-9 1-5 6-7-6 0-8 4zM9 10h7q0-4-4-4-3 1-3 4z" fill="#0a7ad8" fill-rule="evenodd"/></svg></button>
    <button aria-label="应用商店"><svg class="i24" viewBox="0 0 24 24"><path d="M1 7l21-2v18L3 21z" fill="#fff"/><path d="M8 7q0-5 4-5t4 4" fill="none" stroke="#fff" stroke-width="1.500"/><path d="M7 11l4-1v4H7zM12 10l5-1v5h-5zM7 15h4v4l-4-1zM12 15h5v5l-5-1z" fill="#02090c"/></svg></button>
    <button aria-label="文件资源管理器"><svg class="i24" viewBox="0 0 24 24"><path d="M1 3h8l2 2h12v17H1z" fill="#f4cf62"/><path d="M1 8h22v10H1z" fill="#fde9a4"/><path d="M4 14h16v8h-5v-4H9v4H4z" fill="#3aa0e4"/></svg></button>
    <button class="run" aria-label="广联达"><svg class="i24"><use href="#gswirl"/></svg></button>
    <button class="run" aria-label="浏览器"><svg class="i24" viewBox="0 0 24 24"><circle cx="12" cy="12" r="10" fill="#4eb52c"/><path d="M7 12h11q0-5-6-5-5 0-6 5 1 6 11 5" fill="none" stroke="#fff" stroke-width="2.500"/><path d="M3 23q-1-3 0-6M14 2q4-2 9-1" fill="none" stroke="#2e8c1c" stroke-width="2"/></svg></button>
    <button class="run" aria-label="广联达工具"><svg class="i24" viewBox="0 0 24 24"><use href="#gswirl"/><path d="M0 10l4-2 10 13-3 3Q0 22 0 10z" fill="#e24c5c"/><path d="M3 12l7 9M6 12l5 7" stroke="#f6c4ca" stroke-width="1.500"/></svg></button>
    <button class="run" aria-label="记事"><svg class="i24" viewBox="0 0 24 24"><rect x="1" y="1" width="22" height="22" rx="2" fill="#fcd79a" stroke="#f5a31c" stroke-width="3"/><path d="M3 8l12-4 5 12-12 6z" fill="#fff4d8" stroke="#b88a4c"/><path d="M6 11l7-3M7 14l6-2M9 17l5-2" stroke="#555"/><path d="M22 1l-9 14" stroke="#92400e" stroke-width="3"/></svg></button>
    <button class="run" aria-label="帮助"><svg class="i24" viewBox="0 0 24 24"><path d="M3 9h8l3 3v11H3z" fill="#eee"/><path d="M5 13h5M5 16h7M5 19h7" stroke="#444" stroke-width="1.500"/><path d="M11 6q0-4 4-4t4 4q0 3-4 6v3" fill="none" stroke="#f8ec1c" stroke-width="3"/><path d="M13 17h4v3h-4z" fill="#f8ec1c"/></svg></button>
    <button class="run active" aria-label="广联达BIM"><svg class="i24"><use href="#app"/></svg></button>
  </div>
  <div class="cpu">44%<br>CPU使用</div>
  <div class="tray">
    <svg class="i16" viewBox="0 0 16 16"><path d="M2 11l6-6 6 6"/></svg>
    <svg class="i16" viewBox="0 0 16 16"><path d="M3.500 5.500h11v6h-11zM1 4h4M2 1v6h2M4 1v3"/><path d="M6 7h6v3H6z" fill="#eee"/></svg>
    <svg class="i16" viewBox="0 0 16 16"><path d="M2 14Q3 4 14 3M5 14q1-7 9-8M8 14q1-4 6-5M11 14q0-2 3-2"/></svg>
    <svg class="i16" viewBox="0 0 16 16"><path d="M1 6h3l4-4v12l-4-4H1zM10 6q1 2 0 4M12 4q3 4 0 8M14 2q4 6 0 12"/></svg>
    <span>中</span>
    <svg class="i16" viewBox="0 0 28 28"><rect x="2" y="2" width="24" height="24" rx="4" transform="rotate(-8 14 14)" fill="#f04c1c" stroke="none"/><path d="M22 7q-13-4-15 1-1 4 6 5 9 1 8 5-3 6-15 1" stroke="#fff" stroke-width="4"/></svg>
  </div>
  <time class="clock">11:17<br>2017/6/15</time>
  <button class="inbox" aria-label="通知"><svg class="i24" viewBox="0 0 24 24"><path d="M1 2h16v12H8l-3 4v-4H1z" fill="#fff"/><path d="M4 5.500h10M4 8.500h10M4 11.500h6" stroke="#111"/></svg><span>8</span></button>
</footer>
</body>
</html>
```

FILE: styles.css
```css
* { box-sizing: border-box; }
html, body { height: 100%; }
body {
  margin: 0;
  display: flex;
  flex-direction: column;
  overflow: hidden;
  background: #f0f0f0;
  color: #000;
  font: 12px/16px "Open Sans", "Noto Sans CJK SC", sans-serif;
}
h1, h2 { margin: 0; font: inherit; }
ul { margin: 0; padding: 0; list-style: none; }
b { font: 10px/16px "DejaVu Sans Mono", monospace; }
button, input, select { font: inherit; color: inherit; }
button { display: flex; align-items: center; gap: 4px; padding: 0; border: 0; background: none; white-space: nowrap; }
button:disabled { color: #777; }
svg { flex: none; }
.sprite { position: absolute; width: 0; height: 0; }
.i12 { width: 12px; height: 12px; }
.i16 { width: 16px; height: 16px; }
.i24 { width: 24px; height: 24px; }
.i28 { width: 28px; height: 28px; }
.caret { width: 0; height: 0; border: 3px solid transparent; border-top-color: #000; border-bottom: 0; margin: 0 4px 0 2px; }
button:disabled .caret { border-top-color: #555; }
.tight .caret { margin: 0 1px 0 0; }
.sep { width: 1px; height: 16px; background: #b8b8b8; }
.more { margin-left: auto; align-self: flex-start; font-weight: 700; font-size: 14px; }

/* title bar */
.titlebar { position: relative; flex: none; display: flex; align-items: center; gap: 5px; height: 23px; padding-left: 2px; background: #fff; color: #8c8c8c; }
.titlebar h1 { white-space: nowrap; }
.titlebar h1 span { margin-left: 2px; font-size: 13px; }
.winctl { display: flex; gap: 34px; margin: 0 19px 2px auto; }
.winctl path { fill: none; stroke: #888; }
.ime { position: absolute; left: 788px; top: 3px; display: flex; align-items: center; gap: 6px; height: 24px; padding: 0 3px 0 31px; border: 1px solid #a9bdd6; background: #fafcff; }
.sogou { position: absolute; left: -3px; top: -5px; width: 28px; height: 28px; }
.bubble { position: absolute; z-index: 2; left: 1107px; top: -28px; width: 46px; height: 46px; border: 3px solid #d6dcd6; border-radius: 50%; background: #3cc85a; color: #fff; font-weight: 700; line-height: 16px; padding-top: 24px; text-align: center; box-shadow: 0 1px 4px #999; }

/* menus and tool bars */
.menubar { flex: none; display: flex; height: 30px; }
.menus { display: flex; gap: 11px; padding: 0 7px; width: 937px; }
.change { margin-left: 5px; }
.guide { margin-left: -7px; }
.notice { display: flex; align-items: center; width: 188px; padding-left: 30px; background: linear-gradient(#fbfbfb, #f1f1f1); color: #006666; text-decoration: none; }
.account { display: flex; align-items: center; gap: 8px; padding-left: 5px; }
.account .caret { margin-right: 3px; }
.menubar .more, .toolbars .more { padding-right: 4px; }
.toolbars { flex: none; display: flex; gap: 3px; height: 30px; }
.bar { display: flex; align-items: center; gap: 7px; border-radius: 3px; background: linear-gradient(#fdfdfd, #f0f0f0); }
.files { width: 151px; padding-left: 5px; }
.files .sep { height: 24px; }
.files .caret { margin-right: 0; }
.files .more { padding-right: 3px; }
.tools { width: 549px; padding-left: 4px; }
.views { flex: 1; gap: 5px; padding-left: 0; }
.views .caret { margin-left: 1px; }
.views .sep { margin: 0 -1px; }
.boxed { height: 23px; padding: 0; border: 1px solid #777; }

/* workspace */
.workspace { flex: 1; min-height: 0; display: grid; grid-template-columns: 241px 1fr; }
.nav { display: flex; flex-direction: column; min-height: 0; padding: 1px 0 1px; }
.navhead { display: flex; align-items: center; gap: 6px; height: 16px; margin-bottom: 1px; padding-right: 3px; border: 1px solid #777; font-family: "Noto Sans CJK SC", sans-serif; }
.navhead h2 { margin-right: auto; font-size: 13px; }
.section { flex: none; justify-content: center; height: 22px; border: 1px solid #aaa; border-top-color: #fff; border-left-color: #bbb; }
.treebar { display: flex; gap: 7px; align-items: center; height: 27px; margin: 1px 1px 0; padding-left: 5px; border: 1px solid #ddd; background: linear-gradient(#fdfdfd, #eee); }
.treebox { flex: 1; min-height: 0; display: flex; margin: 0 1px 1px; border: 1px solid #828790; background: #fff; }
.tree { flex: 1; overflow: hidden; padding-top: 1px; }
.tree li { position: relative; display: flex; align-items: center; height: 16px; white-space: nowrap; }
.tree svg { width: 16px; height: 16px; }
.leaf { padding-left: 43px; }
.leaf > svg:first-child, .picked > svg { margin-right: 4px; }
.leaf::before { content: ""; position: absolute; left: 32px; top: 0; width: 10px; height: 8px; border: dotted #888; border-width: 0 0 1px 1px; }
.leaf:not(.last)::after { content: ""; position: absolute; left: 32px; top: 8px; height: 8px; border-left: 1px dotted #888; }
.trunk { background: repeating-linear-gradient(#888 0 1px, transparent 1px 2px) 13px 0 / 1px 100% no-repeat; }
.node { padding-left: 9px; }
.node i, .root i { width: 6px; height: 6px; border: solid #999; border-width: 2px 2px 0 0; transform: rotate(45deg); }
.node.open i, .root i { transform: rotate(135deg); border-color: #333; }
.node > svg { margin: 0 5px 0 8px; }
.picked { display: flex; margin-left: -1px; padding-left: 1px; background: #d9d9d9; }
.tree .bookicon { margin-left: 1px; }
.tree em { align-self: flex-start; margin-left: 1px; background: #ffe000; font: 700 8px/10px "DejaVu Sans", sans-serif; }
.scroll { display: flex; flex-direction: column; align-items: center; width: 17px; padding: 3px 0; background: #f0f0f0; }
.scroll path { fill: none; stroke: #444; stroke-width: 2; }
.scroll i { flex: 1; align-self: stretch; margin: 31px 1px 2px; background: #cdcdcd; }

.editor { position: relative; display: flex; flex-direction: column; min-width: 0; padding-left: 6px; }
.parts { flex: none; gap: 6px; height: 28px; padding-left: 4px; }
.combo { display: flex; align-items: center; gap: 6px; }
.combo select { appearance: none; height: 22px; padding: 0 2px; border: 0; background: #fff; }
.combo .caret { margin: 0 0 0 -17px; }
.floor { margin: 0 0 0 -4px; }
.floor select { width: 62px; }
.floor .caret { margin-right: 1px; }
.panes { flex: 1; min-height: 0; display: flex; gap: 5px; padding-bottom: 1px; }
.list { width: 183px; display: flex; flex-direction: column; padding-top: 5px; }
.search { display: flex; height: 26px; padding: 1px; background: #fff; border-right: 1px solid #999; }
.search input { width: 157px; padding: 0 2px 4px; border: 1px solid #777; }
.search input::placeholder { color: #666; opacity: 1; }
.search button { margin: auto; }
.items { flex: 1; padding-top: 1px; border: 1px solid #777; background: #fff; }
.items li { position: relative; display: flex; align-items: center; height: 16px; padding-left: 43px; }
.items svg { width: 12px; height: 12px; margin-right: 7px; }
.items li::before { content: ""; position: absolute; left: 31px; top: 0; width: 10px; height: 8px; border: dotted #888; border-width: 0 0 1px 1px; }
.items li:not(.last)::after { content: ""; position: absolute; left: 31px; top: 8px; height: 8px; border-left: 1px dotted #888; }
.items .root { padding-left: 8px; }
.items .root::before, .items .root::after { display: none; }
.items .root i { border-color: #32b8e8; }
.items .root svg { width: 16px; height: 16px; margin: 0 5px 0 9px; }
.current { display: flex; align-items: center; height: 16px; margin-left: -3px; padding: 0 4px 0 3px; background: #316ac5; }
.props { flex: 1; min-width: 0; display: flex; flex-direction: column; padding-top: 1px; }
.tab { align-self: flex-start; height: 20px; padding: 0 6px 0 6px; border: 1px solid #d9d9d9; border-bottom: 0; background: #fff; }
.sheet { flex: 1; display: flex; justify-content: space-between; align-items: flex-start; padding: 5px 8px 2px 4px; background: #fff; border-top: 1px solid #d9d9d9; }
.sheet table { flex: 1; table-layout: fixed; border-collapse: collapse; border: 1px solid #a0a0a0; }
.sheet th, .sheet td { height: 19px; padding: 0; border: 1px solid #b8b8b8; font-weight: 400; }
.sheet thead th { height: 23px; background: linear-gradient(#fff, #f0f0f0); border-top-color: #fff; }
.sheet thead th:nth-child(1) { width: 22px; }
.sheet thead th:nth-child(2) { width: 190px; }
.sheet tbody th { background: #f2f2f2; font-size: 11px; line-height: 16px; }
.sheet td { padding-left: 19px; white-space: nowrap; line-height: 16px; }
.sheet .sel th { background: #ffd38c; color: #802000; }
.sheet .sel td { background: #0078d7; color: #fff; }
.link td { color: #00f; }
.dim td { color: #808080; }
.fold td { padding-left: 2px; }
.fold button { display: inline-block; width: 12px; height: 12px; margin-right: 5px; border: 1px solid #aaa; color: #000; line-height: 9px; vertical-align: 1px; }
.outer { align-self: stretch; width: 15px; margin-top: 0; }
.outer i { margin: 2px 0 144px; background: #c1c1c1; }

/* section dialog */
.dialog { position: absolute; left: 353px; right: 22px; top: 49px; bottom: 3px; display: flex; flex-direction: column; padding: 0 7px 7px 6px; border: 1px solid #1c3040; background: linear-gradient(#99b4d1, #b9d1ea 30px); }
.dialog h2 { height: 30px; line-height: 38px; }
.client { flex: 1; min-height: 0; display: flex; flex-direction: column; background: #f0f0f0; }
.tabs { display: flex; align-items: flex-end; height: 21px; padding-left: 2px; border-bottom: 1px solid #d9d9d9; }
.tabs button { height: 18px; padding: 0 9px 0 5px; border: 1px solid #d9d9d9; border-bottom: 0; }
.tabs .on { height: 20px; padding: 0 13px 0 6px; background: #fff; }
.body { flex: 1; min-height: 0; display: flex; flex-direction: column; align-items: flex-start; padding: 4px 3px 0 4px; border: 1px solid #fff; border-width: 0 1px 1px; }
.rebar { height: 28px; padding: 0 6px 0 6px; }
.stirrup { height: 28px; padding: 0 5px 0 6px; gap: 4px; }
.stirrup > button:first-child { margin-right: 4px; }
.stirrup span { margin: 0 -3px 0 -2px; }
.bar .on { height: 23px; padding: 0 3px; border: 1px solid #0078d7; background: #dfebf6; }
.size select { width: 50px; }
.size { margin-left: -4px; }
.size .caret { margin-left: -14px; }
.rebar .sep { margin: 0 -1px; }
.rebar .ref { margin-left: -2px; }
.rebar .ref .caret { margin-right: 1px; }
.canvas { flex: 1; min-height: 0; align-self: stretch; border: 2px solid #f00; background: #14171e; }
.canvas > svg { display: block; width: 100%; height: 100%; }
.value, .ghost { font-family: "Liberation Serif", serif; }
.value { font-size: 16px; fill: #fff; }
.ghost { font-size: 14px; fill: #323843; }
.hook { font: 10px "Liberation Mono", monospace; fill: #0f0; }
.snaps { flex: none; gap: 3px; height: 31px; padding-left: 1px; }
.perp { margin-left: 6px; }
.hint { flex: none; display: flex; gap: 2px; height: 24px; padding-top: 2px; }
.hint span { display: flex; align-items: center; border: 1px solid #d4d4d4; padding-left: 2px; background: linear-gradient(#fff, #f0f0f0); }
.hint span:first-child { width: 98px; }
.hint span:last-child { flex: 1; }
.hint svg { margin: auto 0 0 auto; }

/* status bar */
.status { flex: none; display: flex; gap: 2px; height: 22px; padding: 2px 0 1px; }
.status span { display: flex; align-items: center; padding-left: 1px; border: 1px solid #d4d4d4; background: linear-gradient(#fff, #f0f0f0); white-space: nowrap; }
.s1 { width: 148px; }
.s2 { width: 79px; }
.s3 { width: 98px; }
.s4 { width: 49px; }
.s5 { flex: 1; }
.s6 { width: 70px; }

/* task bar */
.taskbar { flex: none; display: flex; height: 40px; background: #020b0f; color: #fff; }
.start { width: 48px; justify-content: center; }
.find { display: flex; align-items: center; gap: 4px; width: 345px; padding: 0 13px 0 8px; background: #333; }
.find input { flex: 1; min-width: 0; padding: 0; border: 0; background: none; font-size: 14px; }
.find input::placeholder { color: #a0a0a0; opacity: 1; }
.apps { display: flex; gap: 1px; }
.apps button { justify-content: center; width: 48px; height: 40px; }
.apps .wide { width: 50px; }
.apps .run { background: linear-gradient(#76b9ed, #76b9ed) 50% 100% / 40px 2px no-repeat; }
.apps .active { background: linear-gradient(#76b9ed, #76b9ed) 50% 100% / 48px 2px no-repeat #343b3f; }
.cpu, .clock { padding-top: 3px; line-height: 17px; text-align: center; }
.cpu { margin-left: auto; }
.tray { display: flex; align-items: center; gap: 8px; margin: 0 19px 0 18px; }
.tray path { fill: none; stroke: #eee; }
.tray span { width: 16px; margin-right: 5px; font-size: 14px; text-align: center; }
.inbox { position: relative; margin: 0 3px 0 18px; padding-right: 12px; border-right: 1px solid #454b4e; }
.inbox span { position: absolute; left: 9px; top: 18px; width: 16px; height: 16px; border: 1px solid #ddd; border-radius: 50%; background: #333; font-size: 11px; line-height: 14px; }
```
